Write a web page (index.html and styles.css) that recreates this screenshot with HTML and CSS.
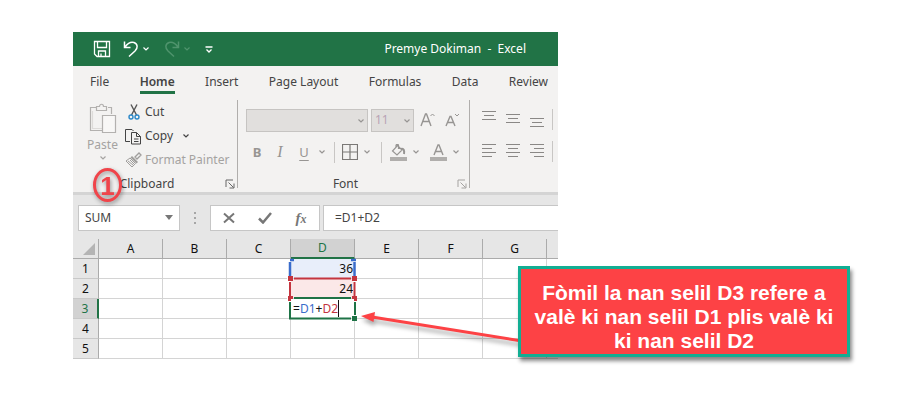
FILE: index.html
```html
<!DOCTYPE html>
<html lang="ht">
<head>
<meta charset="utf-8">
<title>Premye Dokiman - Excel</title>
<link rel="stylesheet" href="styles.css">
</head>
<body>
<svg width="0" height="0" class="defs" aria-hidden="true">
  <symbol id="chev" viewBox="0 0 8 6"><path d="M1.5 1.5 4 4l2.500-2.500" fill="none" stroke="currentColor" stroke-width="1.200"/></symbol>
  <symbol id="launch" viewBox="0 0 10 10"><path d="M1 8V1h7M3.500 3.500l5 5M9 4.500V9H4.500" fill="none" stroke="currentColor"/></symbol>
</svg>
<main class="stage">
  <section class="app">
    <header class="titlebar">
      <div class="quick">
        <button class="q-save" aria-label="Save"><svg width="18" height="18" viewBox="0 0 18 18" fill="none" stroke="currentColor" stroke-width="1.300"><path d="M1.500 1.500h15v15H4l-2.500-2.500zM4.500 1.500v6h9v-6M5.500 16.500v-5.500h7v5.500M8 16.500v-3"/></svg></button>
        <button class="q-undo" aria-label="Undo"><svg width="16" height="18" viewBox="0 0 16 18" fill="none" stroke="currentColor" stroke-width="1.500"><path d="M1.500 1.500v6h6M2 7C5 3 8 1.500 11 2.500c4 1.500 4 5.500 1 8.500l-6 5.500"/></svg></button>
        <button class="q-chev" aria-label="Undo list"><svg width="8" height="6"><use href="#chev"/></svg></button>
        <button class="q-undo dim" aria-label="Redo"><svg width="16" height="18" viewBox="0 0 16 18" fill="none" stroke="currentColor" stroke-width="1.500"><path d="M14.500 1.500v6h-6M14 7C11 3 8 1.500 5 2.500 1 4 1 8 4 11l6 5.500"/></svg></button>
        <button class="q-chev dim" aria-label="Redo list"><svg width="8" height="6"><use href="#chev"/></svg></button>
        <button class="q-more" aria-label="Customize toolbar"><svg width="8" height="7" viewBox="0 0 8 7" fill="none" stroke="currentColor" stroke-width="1.300"><path d="M.5 1h7M1.500 3.500 4 6l2.500-2.500"/></svg></button>
      </div>
      <h1>Premye Dokiman&nbsp; -&nbsp; Excel</h1>
    </header>
    <nav class="tabs">
      <a href="#file">File</a><a href="#home" class="active">Home</a><a href="#insert">Insert</a><a href="#layout">Page Layout</a><a href="#formulas">Formulas</a><a href="#data">Data</a><a href="#review">Review</a>
    </nav>
    <div class="ribbon">
      <div class="group clipboard">
        <button class="paste">
          <svg width="30" height="32" viewBox="0 0 30 32" fill="none" stroke="#b3b1af" stroke-width="1.200"><path d="M8 4.500H2.500v23H14M20 4.500h3.500V11" /><path d="M4.500 8v17.500H14" stroke="#dddbd9"/><path d="M8.500 7.500v-4h3c0-3 4-3 4 0h3v4z"/><path d="M14.500 12.500h13v17h-13z" fill="#f8f7f6"/></svg>
          <span>Paste</span>
          <svg class="grey" width="8" height="6"><use href="#chev"/></svg>
        </button>
        <button class="tool"><span class="ico"><svg width="14" height="16" viewBox="0 0 14 16" fill="none"><path d="M4 .5 9.500 11M10 .5 4.500 11" stroke="#555" stroke-width="1.400"/><circle cx="4" cy="13" r="2" stroke="#2b88c8" stroke-width="1.400"/><circle cx="10" cy="13" r="2" stroke="#2b88c8" stroke-width="1.400"/></svg></span>Cut</button>
        <button class="tool"><span class="ico"><svg width="17" height="17" viewBox="0 0 17 17" fill="none" stroke="#444"><path d="M5 13.500H.5V1.500H7l1.500 1.500"/><path d="M6.500 4.500h5l4 4v7.500h-9zM11.500 4.500v4h4M9 11h4.500M9 13.500h4.500"/></svg></span>Copy<svg class="after" width="8" height="6"><use href="#chev"/></svg></button>
        <button class="tool grey"><span class="ico"><svg width="17" height="16" viewBox="0 0 17 16"><path d="m10 5 4-4 2 2-4 4z" fill="none" stroke="#a09e9c" stroke-width="1.300"/><path d="m7 4 6 6-1.500 1.500-6-6z" fill="#a09e9c"/><path d="m5 6 5.500 5.500L7 15 1 9z" fill="none" stroke="#a09e9c"/><path d="m3 9 5 4M5 8l4 4" stroke="#a09e9c"/></svg></span>Format Painter</button>
        <footer>Clipboard<button class="launcher" aria-label="Clipboard settings"><svg width="10" height="10"><use href="#launch"/></svg></button></footer>
      </div>
      <div class="group font">
        <div class="line combos">
          <label class="combo wide"><select aria-label="Font name"><option></option></select><svg width="8" height="6"><use href="#chev"/></svg></label>
          <label class="combo"><select aria-label="Font size"><option>11</option></select><svg width="8" height="6"><use href="#chev"/></svg></label>
          <button class="grow" aria-label="Increase font size"><svg width="16" height="16" viewBox="0 0 16 16" fill="none" stroke="currentColor" stroke-width="1.400"><path d="m1 14 4.500-12h1L11 14M2.500 9.500h7"/><path d="m10.500 4 2-2 2 2" stroke-width="1"/></svg></button>
          <button class="grow" aria-label="Decrease font size"><svg width="16" height="16" viewBox="0 0 16 16" fill="none" stroke="currentColor" stroke-width="1.400"><path d="M1 14 5 4.500h1L10 14M2.500 10.500h6"/><path d="m10 2 2 2 2-2" stroke-width="1"/></svg></button>
        </div>
        <div class="line styles">
          <button class="w22 bold">B</button><button class="w24 italic">I</button><button class="w24 under">U</button><button class="w12" aria-label="Underline styles"><svg width="8" height="6"><use href="#chev"/></svg></button><i class="sep"></i>
          <button class="w18" aria-label="Borders"><svg width="16" height="16" viewBox="0 0 16 16" fill="none" stroke="#7a7876"><path d="M.5.500h15v15H.5zM8 .5v15M.5 8h15" stroke-width="1.200"/></svg></button><button class="w16" aria-label="Border styles"><svg width="8" height="6"><use href="#chev"/></svg></button><i class="sep"></i>
          <button class="w20" aria-label="Fill colour"><svg width="17" height="17" viewBox="0 0 17 17" fill="none" stroke="currentColor" stroke-width="1.200"><path d="M7.500 1.500 12 6 7 11 2.500 7zM6 4V1.500c0-1.500 2.500-1.500 2.500 0V5"/><path d="M11 5c3-1 3.500 2 3 5" stroke-width="2"/><path d="M0 15h17" stroke="#b0aeac" stroke-width="4"/></svg></button><button class="w16" aria-label="Fill colours"><svg width="8" height="6"><use href="#chev"/></svg></button>
          <button class="w28" aria-label="Font colour"><svg width="17" height="17" viewBox="0 0 17 17" fill="none" stroke="currentColor" stroke-width="1.400"><path d="M4 11 8 1h1l4 10M5.500 7.500h6"/><path d="M0 15h17" stroke="#b0aeac" stroke-width="4"/></svg></button><button class="w8" aria-label="Font colours"><svg width="8" height="6"><use href="#chev"/></svg></button>
        </div>
        <footer>Font<button class="launcher grey" aria-label="Font settings"><svg width="10" height="10"><use href="#launch"/></svg></button></footer>
      </div>
      <div class="group align">
        <div class="line">
          <button aria-label="Top align"><svg width="14" height="20"><path d="M0 2.500h14M2 6.500h10M0 10.500h14"/></svg></button>
          <button aria-label="Middle align"><svg width="14" height="20"><path d="M0 5.500h14M2 9.500h10M0 13.500h14"/></svg></button>
          <button aria-label="Bottom align"><svg width="14" height="20"><path d="M0 9.500h14M2 13.500h10M0 17.500h14"/></svg></button>
          <i class="sep"></i>
        </div>
        <div class="line">
          <button aria-label="Align left"><svg width="14" height="20"><path d="M0 3.500h14M0 7.500h10M0 11.500h14M0 15.500h10"/></svg></button>
          <button aria-label="Centre"><svg width="14" height="20"><path d="M0 3.500h14M2 7.500h10M0 11.500h14M2 15.500h10"/></svg></button>
          <button aria-label="Align right"><svg width="14" height="20"><path d="M0 3.500h14M4 7.500h10M0 11.500h14M4 15.500h10"/></svg></button>
          <i class="sep"></i>
        </div>
      </div>
    </div>
    <div class="formula">
      <div class="namebox"><input aria-label="Name box" value="SUM"><svg width="8" height="5"><path d="M0 0h8L4 5z" fill="#777"/></svg></div>
      <svg class="dots" width="2" height="12" fill="#a6a6a6"><path d="M0 0h2v2H0zM0 5h2v2H0zM0 10h2v2H0z"/></svg>
      <div class="actions">
        <button aria-label="Cancel"><svg width="12" height="12" fill="none" stroke="#777" stroke-width="2"><path d="m1 1.500 10 9M11 1.500l-10 9"/></svg></button>
        <button aria-label="Enter"><svg width="14" height="12" fill="none" stroke="#777" stroke-width="2.500"><path d="m1 6.500 4 4L13 1"/></svg></button>
        <button class="fx" aria-label="Insert function">f<small>x</small></button>
      </div>
      <input class="bar" aria-label="Formula" value="=D1+D2">
    </div>
    <table>
      <colgroup><col class="num"><col class="c"><col class="c"><col class="c"><col class="c"><col class="c"><col class="c"><col class="c"><col></colgroup>
      <thead><tr><th class="corner"><svg width="12" height="12"><path d="M12 0v12H0z" fill="#b4b4b4"/></svg></th><th>A</th><th>B</th><th>C</th><th class="on">D</th><th>E</th><th>F</th><th>G</th><th class="last"></th></tr></thead>
      <tbody>
        <tr><th>1</th><td></td><td></td><td></td><td class="d1">36
          <svg class="ranges" width="74" height="68" viewBox="0 0 74 68">
            <path d="M3 3v58M69 3v58" stroke="#fff" stroke-width="4"/>
            <path d="M4 6v14M68.500 6v14M4 4h4M65 4h5" stroke="#3a6ccb" stroke-width="2.500"/>
            <path d="M8 22.500h57M4 26v14M68.500 26v14" stroke="#c4353f" stroke-width="2"/>
            <path d="M8 42h57M4 46v17M3 62.500h62M69 46v13" stroke="#1e7346" stroke-width="2" fill="none"/>
            <path d="M2 20h5v5H2zM66 20h5v5h-5zM2 40h5v3H5v2H2zM66 40h5v5h-3v-2h-2z" fill="#c4353f"/>
            <path d="M66 60h5v5h-5z" fill="#1e7346"/>
          </svg></td><td></td><td></td><td></td><td class="last"></td></tr>
        <tr><th>2</th><td></td><td></td><td></td><td class="d2">24</td><td></td><td></td><td></td><td class="last"></td></tr>
        <tr><th class="on">3</th><td></td><td></td><td></td><td class="d3">=<span class="blue">D1</span>+<span class="red">D2</span></td><td></td><td></td><td></td><td class="last"></td></tr>
        <tr><th>4</th><td></td><td></td><td></td><td></td><td></td><td></td><td></td><td class="last"></td></tr>
        <tr><th>5</th><td></td><td></td><td></td><td></td><td></td><td></td><td></td><td class="last"></td></tr>
      </tbody>
    </table>
  </section>
  <div class="step">1</div>
  <svg class="arrow" width="170" height="50" viewBox="0 0 170 50"><path d="M12 7 168 32" stroke="#fd4245" stroke-width="3"/><path d="m1 6 14-4-1.500 10z" fill="#fd4245"/></svg>
  <p class="callout">Fòmil la nan selil D3 refere a valè ki nan selil D1 plis valè ki ki nan selil D2</p>
</main>
</body>
</html>
```
FILE: styles.css
```css
* { box-sizing: border-box; }
body { margin: 0; background: #fff; font: 12px/16px "Noto Sans", "Open Sans", sans-serif; color: #444; }
button, input, select { font: inherit; color: inherit; border: 0; padding: 0; margin: 0; background: none; border-radius: 0; outline: 0; }
button { display: flex; align-items: center; justify-content: center; }
svg { display: block; flex: none; }
.defs { position: absolute; }
.stage { position: relative; min-height: 100vh; padding: 32px 347px 0 73px; }
.app { overflow: hidden; }

.titlebar { display: flex; justify-content: space-between; align-items: center; height: 34px; padding: 0 32px 0 20px; background: #217346; color: #fff; }
.titlebar h1 { margin: 0; font-size: 12px; font-weight: 400; }
.quick { display: flex; align-items: center; }
.quick .dim { color: #4f946d; }
.q-save { width: 18px; margin-right: 12px; }
.q-undo { width: 16px; }
.q-chev { width: 8px; margin: 0 14px 0 3px; }

.tabs { display: flex; height: 32px; padding: 0 10px 0 17px; justify-content: space-between; background: #f3f2f1; }
.tabs a { color: #444; text-decoration: none; line-height: 31px; height: 28px; }
.tabs .active { font-weight: 600; border-bottom: 3px solid #217346; }

.ribbon { display: flex; height: 94px; padding-top: 2px; background: #f3f2f1; color: #979593; }
.group { height: 88px; border-right: 1px solid #b0aeac; flex: none; }
.grey { color: #a5a3a1; }
.group footer { display: flex; justify-content: center; position: relative; line-height: 24px; color: #444; }
.launcher { position: absolute; right: 2px; top: 7px; color: #666; }
.launcher.grey { color: #a5a3a1; }
.clipboard { width: 165px; display: grid; grid-template: 24px 24px 24px 16px / 36px 1fr; padding-left: 15px; }
.paste { grid-row: 1 / 4; flex-direction: column; justify-content: flex-start; gap: 2px; padding: 3px 7px 0 0; color: #a5a3a1; }
.tool { justify-content: flex-start; color: #444; white-space: nowrap; }
.tool.grey { color: #a5a3a1; }
.ico { width: 21px; display: flex; justify-content: center; padding-right: 2px; }
.after { margin-left: 9px; }
.clipboard footer { grid-column: 1 / 3; margin-left: -15px; padding-right: 16px; }
.font { width: 232px; padding-left: 8px; }
.line { display: flex; align-items: center; }
.combos { height: 40px; gap: 3px; }
.combo { position: relative; display: block; flex: none; width: 43px; height: 23px; }
.wide { width: 122px; }
.combo select { appearance: none; width: 100%; height: 100%; padding: 0 3px; background: #e1dfdd; border: 1px solid #c6c4c2; color: #b8a3b5; }
.combo svg { position: absolute; right: 3px; top: 9px; }
.grow { width: 22px; }
.styles { height: 24px; margin-bottom: 8px; }
.styles .sep { margin: 0 6px; }
.sep { width: 1px; height: 21px; background: #c8c6c4; flex: none; }
.bold { font-weight: 700; font-size: 13px; }
.italic { font: italic 16px/16px "Liberation Serif", serif; }
.under { text-decoration: underline; text-underline-offset: 3px; font-size: 13px; }
.w22 { width: 22px; } .w24 { width: 24px; } .w12 { width: 12px; } .w18 { width: 18px; } .w16 { width: 16px; } .w20 { width: 20px; } .w28 { width: 28px; } .w8 { width: 8px; }
.font footer { padding-right: 24px; }
.align { border: 0; padding: 3px 0 0 12px; }
.align .line { gap: 10px; height: 32px; }
.align .sep { margin-left: -2px; }
.align path { stroke: #8a8886; }

.formula { display: flex; align-items: center; height: 47px; padding: 5px 0 4px 5px; background: #e6e6e6; border-top: 3px solid #d4d4d4; }
.namebox, .actions, .bar { height: 26px; background: #fff; border: 1px solid #c6c6c6; }
.namebox { display: flex; align-items: center; width: 102px; padding: 0 6px; }
.namebox input { flex: 1; min-width: 0; }
.dots { margin: 0 14px; }
.actions { display: flex; width: 110px; flex: none; }
.actions button { flex: 1; }
.fx { font: italic 700 15px/16px "Liberation Serif", serif; color: #777; }
.fx small { font-size: 12px; padding-top: 3px; }
.bar { flex: 1; min-width: 0; margin-left: 3px; padding-left: 11px; border-right: 0; }

table { width: 100%; table-layout: fixed; border-collapse: separate; border-spacing: 0; color: #111; }
.num { width: 26px; } .c { width: 64px; }
th, td { height: 20px; padding: 0; font-weight: 400; line-height: 16px; border-right: 1px solid #d4d4d4; border-bottom: 1px solid #d4d4d4; }
th { background: #e6e6e6; border-color: #ababab; }
tbody th { border-bottom-color: #c8c8c8; }
.corner svg { margin-left: 10px; }
.last { border-right: 0; }
.on { background: #d2d2d2; color: #217346; }
thead .on { border-bottom: 2px solid #217346; }
tbody .on { border-right: 2px solid #217346; }
.d1, .d2 { text-align: right; padding-right: 1px; }
.d1 { position: relative; background: #e8eefa; }
.d2 { background: #fbe8e8; }
.d3 { padding-left: 2px; white-space: nowrap; }
.ranges { position: absolute; left: -5px; top: -3px; }
.blue { color: #3a6ccb; }
.red { color: #c4353f; border-right: 1px solid #111; }

.step { position: absolute; left: 93px; top: 168px; width: 29px; height: 34px; border: 3px solid #f0444a; border-radius: 50%; font: 700 26px/30px "Liberation Sans", sans-serif; color: #f0444a; text-align: center; filter: drop-shadow(1px 2px 2px #0006); }
.arrow { position: absolute; left: 360px; top: 310px; filter: drop-shadow(1px 4px 2px #0005); }
.callout { position: absolute; left: 518px; top: 266px; width: 332px; margin: 0; padding: 12px 10px 1px; border: 3px solid #12ae93; background: #fd4245; color: #fff; font: 700 21px/24px "Liberation Sans", Arial, sans-serif; text-align: center; box-shadow: 2px 4px 4px #0007; }
```
